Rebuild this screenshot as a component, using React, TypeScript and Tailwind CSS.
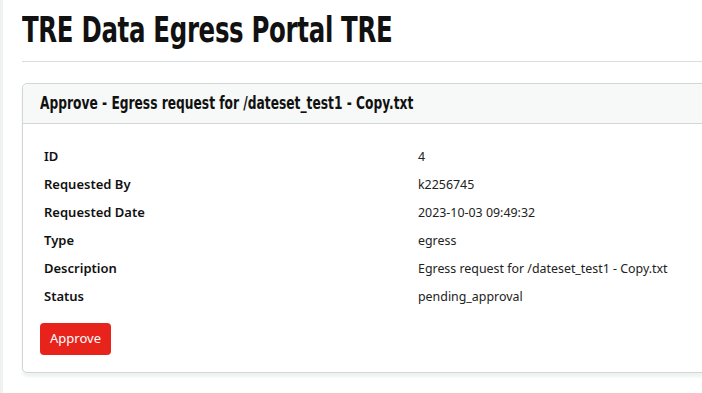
import React from 'react';

type DetailRow = {
  label: string;
  value: string;
};

const rows: DetailRow[] = [
  { label: 'ID', value: '4' },
  { label: 'Requested By', value: 'k2256745' },
  { label: 'Requested Date', value: '2023-10-03 09:49:32' },
  { label: 'Type', value: 'egress' },
  { label: 'Description', value: 'Egress request for /dateset_test1 - Copy.txt' },
  { label: 'Status', value: 'pending_approval' },
];

const headingFont = {
  fontFamily: '"DejaVu Sans", sans-serif',
};

const App = () => {
  return (
    <div
      className="w-[702px] h-[393px] overflow-hidden bg-white border-l-[3px] border-[#eef2f0] text-[#212529]"
      style={{ fontFamily: '"Noto Sans", "Open Sans", sans-serif' }}
    >
      <div className="pl-[19px] pt-[8px]">
        {/* page title */}
        <h1
          className="inline-block origin-left scale-x-[0.68] whitespace-nowrap text-[36px] font-bold leading-[44px] tracking-[-0.5px] text-[#111]"
          style={headingFont}
        >
          TRE Data Egress Portal TRE
        </h1>
        <hr className="mt-[9px] w-[720px] border-t border-[#d6dce1]" />

        {/* request card */}
        <div className="mt-[21px] w-[720px] rounded-[5px] border border-[#d3d6d5] shadow-[0_4px_3px_#eef3f1] bg-white">
          <div className="h-[40px] flex items-center px-[17px] bg-[#f6f9f7] border-b border-[#d3d6d5] rounded-t-[5px]">
            <h2
              className="inline-block origin-left scale-x-[0.7] whitespace-nowrap text-[17.5px] font-bold text-[#111]"
              style={headingFont}
            >
              Approve - Egress request for /dateset_test1 - Copy.txt
            </h2>
          </div>
          <div className="px-[17px] pt-[19px] pb-[17px]">
            <div className="pl-[4px]">
              {rows.map((row) => (
                <div key={row.label} className="flex h-[28px] items-center text-[13px]">
                  <span className="w-[374px] font-semibold text-[#111]">{row.label}</span>
                  <span className="text-[12.4px] text-[#222]">{row.value}</span>
                </div>
              ))}
            </div>
            <button className="mt-[12px] h-[32px] w-[71px] rounded-[4px] bg-[#e8231c] text-[13px] text-white">
              Approve
            </button>
          </div>
        </div>
      </div>
    </div>
  );
};

export default App;
